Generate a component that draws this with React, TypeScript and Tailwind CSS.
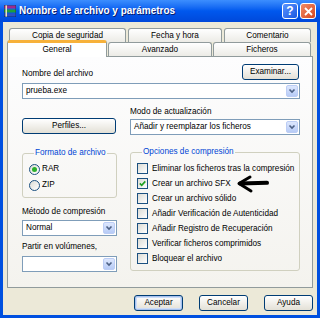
import React from 'react';

const btnCls =
  'h-[16px] rounded-[3px] border border-[#003C74] bg-gradient-to-b from-white to-[#E3E0D6] flex items-center justify-center text-black';

function XpButton({ label, className = '', primary = false }: { label: string; className?: string; primary?: boolean }) {
  return (
    <div className={`${btnCls} ${className} ${primary ? 'shadow-[inset_0_0_0_1px_#A7C2EE,inset_0_0_0_2px_#CEDDF7]' : ''}`}>
      {label}
    </div>
  );
}

function Combo({ text }: { text?: string }) {
  return (
    <div className="h-[16px] w-full border border-[#7F9DB9] bg-white flex items-center">
      <span className="flex-1 pl-[3px] truncate">{text}</span>
      <div className="w-[12px] h-[12px] mr-[1px] rounded-[2px] border border-[#BCCDF5] bg-gradient-to-b from-[#DDE7FD] to-[#B7CBF6] flex items-center justify-center">
        <svg width="8" height="6" viewBox="0 0 8 6">
          <path d="M1.5 1.5 L4 4 L6.5 1.5" fill="none" stroke="#4D6185" strokeWidth="1.6" />
        </svg>
      </div>
    </div>
  );
}

function Check({ label, checked = false }: { label: string; checked?: boolean }) {
  return (
    <div className="h-[15px] flex items-center gap-[4px]">
      <div className="w-[11px] h-[11px] border border-[#1C5180] bg-gradient-to-br from-[#DCDCD5] to-white flex items-center justify-center">
        {checked && (
          <svg width="7" height="7" viewBox="0 0 7 7">
            <path d="M0.8 3.4 L2.7 5.4 L6.3 1.4" fill="none" stroke="#21A121" strokeWidth="1.6" />
          </svg>
        )}
      </div>
      <span>{label}</span>
    </div>
  );
}

function Radio({ label, checked = false }: { label: string; checked?: boolean }) {
  return (
    <div className="h-[16px] flex items-center gap-[2px]">
      <div className="w-[11px] h-[11px] rounded-full border border-[#1C5180] bg-gradient-to-br from-[#DCDCD5] to-white flex items-center justify-center">
        {checked && <div className="w-[5px] h-[5px] rounded-full bg-[#2BB02B]" />}
      </div>
      <span>{label}</span>
    </div>
  );
}

function Group({ title, children, className = '' }: { title: string; children: React.ReactNode; className?: string }) {
  return (
    <fieldset className={`border border-[#D0D0BF] rounded-[3px] pl-[6px] ${className}`}>
      <legend className="ml-[5px] px-[1px] h-[10px] leading-[10px] text-[#0046D5]">{title}</legend>
      {children}
    </fieldset>
  );
}

export default function App() {
  return (
    <div className="w-[320px] h-[318px] flex flex-col font-[family-name:Liberation_Sans,Arial,sans-serif] text-[8.2px] leading-[10px] text-black overflow-hidden">
      {/* Title bar */}
      <div className="h-[22px] flex items-center bg-gradient-to-b from-[#3C8EFE] via-[#0058EE] to-[#0048DA] px-[4px]">
        <svg width="12" height="12" viewBox="0 0 12 12" className="shrink-0">
          <rect x="0" y="0.5" width="12" height="3" fill="#9B2A8F" />
          <rect x="0" y="4.5" width="12" height="3" fill="#1F9E3C" />
          <rect x="0" y="8.5" width="12" height="3" fill="#2F4FC2" />
          <rect x="1.5" y="0" width="1.5" height="12" fill="#E9E2B8" />
          <rect x="0" y="0" width="12" height="12" fill="none" stroke="#202020" strokeWidth="0.6" />
        </svg>
        <span className="ml-[3px] text-white font-bold text-[10px] [text-shadow:1px_1px_0_#0A1E6E]">
          Nombre de archivo y parámetros
        </span>
        <div className="ml-auto flex gap-[2px]">
          <div className="w-[16px] h-[16px] rounded-[3px] border border-white bg-gradient-to-br from-[#5A93FF] to-[#1C58E0] flex items-center justify-center text-white font-bold text-[12px]">
            ?
          </div>
          <div className="w-[16px] h-[16px] rounded-[3px] border border-white bg-gradient-to-br from-[#F08A64] to-[#D5441C] flex items-center justify-center">
            <svg width="9" height="9" viewBox="0 0 9 9">
              <path d="M1 1 L8 8 M8 1 L1 8" stroke="white" strokeWidth="1.8" />
            </svg>
          </div>
        </div>
      </div>

      {/* Body */}
      <div className="relative flex-1 bg-[#ECE9D8] border-x-[3px] border-b-[3px] border-[#0050E0] pt-[6px]">
        {/* tabs row 1 */}
        <div className="ml-[6px] flex gap-[2px]">
          {[
            ['Copia de seguridad', 'w-[117px]'],
            ['Fecha y hora', 'w-[94px]'],
            ['Comentario', 'w-[87px]'],
          ].map(([t, w]) => (
            <div
              key={t}
              className={`${w} h-[14px] border border-b-0 border-[#919B9C] rounded-t-[3px] bg-gradient-to-b from-white to-[#ECEBE6] flex items-center justify-center`}
            >
              {t}
            </div>
          ))}
        </div>
        {/* tabs row 2 */}
        <div className="ml-[4px] h-[14px] flex items-end">
          <div className="relative z-10 w-[100px] h-[17px] -mb-px border border-b-0 border-[#919B9C] border-t-[3px] border-t-[#F7B13A] rounded-t-[3px] bg-white flex justify-center pt-[2px]">
            General
          </div>
          <div className="ml-[1px] w-[104px] h-[14px] border border-b-0 border-[#919B9C] rounded-t-[3px] bg-gradient-to-b from-white to-[#ECEBE6] flex items-center justify-center">
            Avanzado
          </div>
          <div className="ml-[1px] w-[98px] h-[14px] border border-b-0 border-[#919B9C] rounded-t-[3px] bg-gradient-to-b from-white to-[#ECEBE6] flex items-center justify-center">
            Ficheros
          </div>
        </div>

        {/* panel */}
        <div className="ml-[4px] w-[306px] h-[232px] border border-[#919B9C] bg-gradient-to-b from-[#FDFDFE] to-[#F4F3EE] pl-[14px] pr-[12px] pt-[7px]">
          <div className="flex items-end justify-between h-[16px]">
            <span className="mb-[1px]">Nombre del archivo</span>
            <XpButton label="Examinar..." className="w-[57px] mr-[1px]" />
          </div>
          <div className="mt-[3px]">
            <Combo text="prueba.exe" />
          </div>

          <div className="mt-[8px] flex gap-[13px]">
            {/* left column */}
            <div className="w-[95px]">
              <XpButton label="Perfiles..." className="mt-[11px] w-[94px] h-[15px]" />
              <Group title="Formato de archivo" className="mt-[14px] pt-[3px] pb-[4px]">
                <Radio label="RAR" checked />
                <Radio label="ZIP" />
              </Group>
              <div className="mt-[9px]">Método de compresión</div>
              <div className="mt-[3px]">
                <Combo text="Normal" />
              </div>
              <div className="mt-[6px]">Partir en volúmenes,</div>
              <div className="mt-[4px]">
                <Combo />
              </div>
            </div>

            {/* right column */}
            <div className="w-[170px]">
              <div>Modo de actualización</div>
              <div className="mt-[2px]">
                <Combo text="Añadir y reemplazar los ficheros" />
              </div>
              <Group title="Opciones de compresión" className="mt-[12px] pt-[4px] pb-[4px]">
                <Check label="Eliminar los ficheros tras la compresión" />
                <Check label="Crear un archivo SFX" checked />
                <Check label="Crear un archivo sólido" />
                <Check label="Añadir Verificación de Autenticidad" />
                <Check label="Añadir Registro de Recuperación" />
                <Check label="Verificar ficheros comprimidos" />
                <Check label="Bloquear el archivo" />
              </Group>
            </div>
          </div>
        </div>

        {/* bottom buttons */}
        <div className="mt-[7px] mr-[4px] flex justify-end gap-[16px]">
          <XpButton label="Aceptar" className="w-[49px]" primary />
          <XpButton label="Cancelar" className="w-[49px]" />
          <XpButton label="Ayuda" className="w-[49px]" />
        </div>

        {/* hand-drawn arrow annotation */}
        <svg width="34" height="20" viewBox="0 0 34 20" className="absolute left-[232px] top-[152px]">
          <path d="M5 9.5 L32 8.8" stroke="black" strokeWidth="4" strokeLinecap="round" fill="none" />
          <path d="M4 9.5 L15 3 M4 9.5 L16 17" stroke="black" strokeWidth="3" strokeLinecap="round" fill="none" />
        </svg>
      </div>
    </div>
  );
}
